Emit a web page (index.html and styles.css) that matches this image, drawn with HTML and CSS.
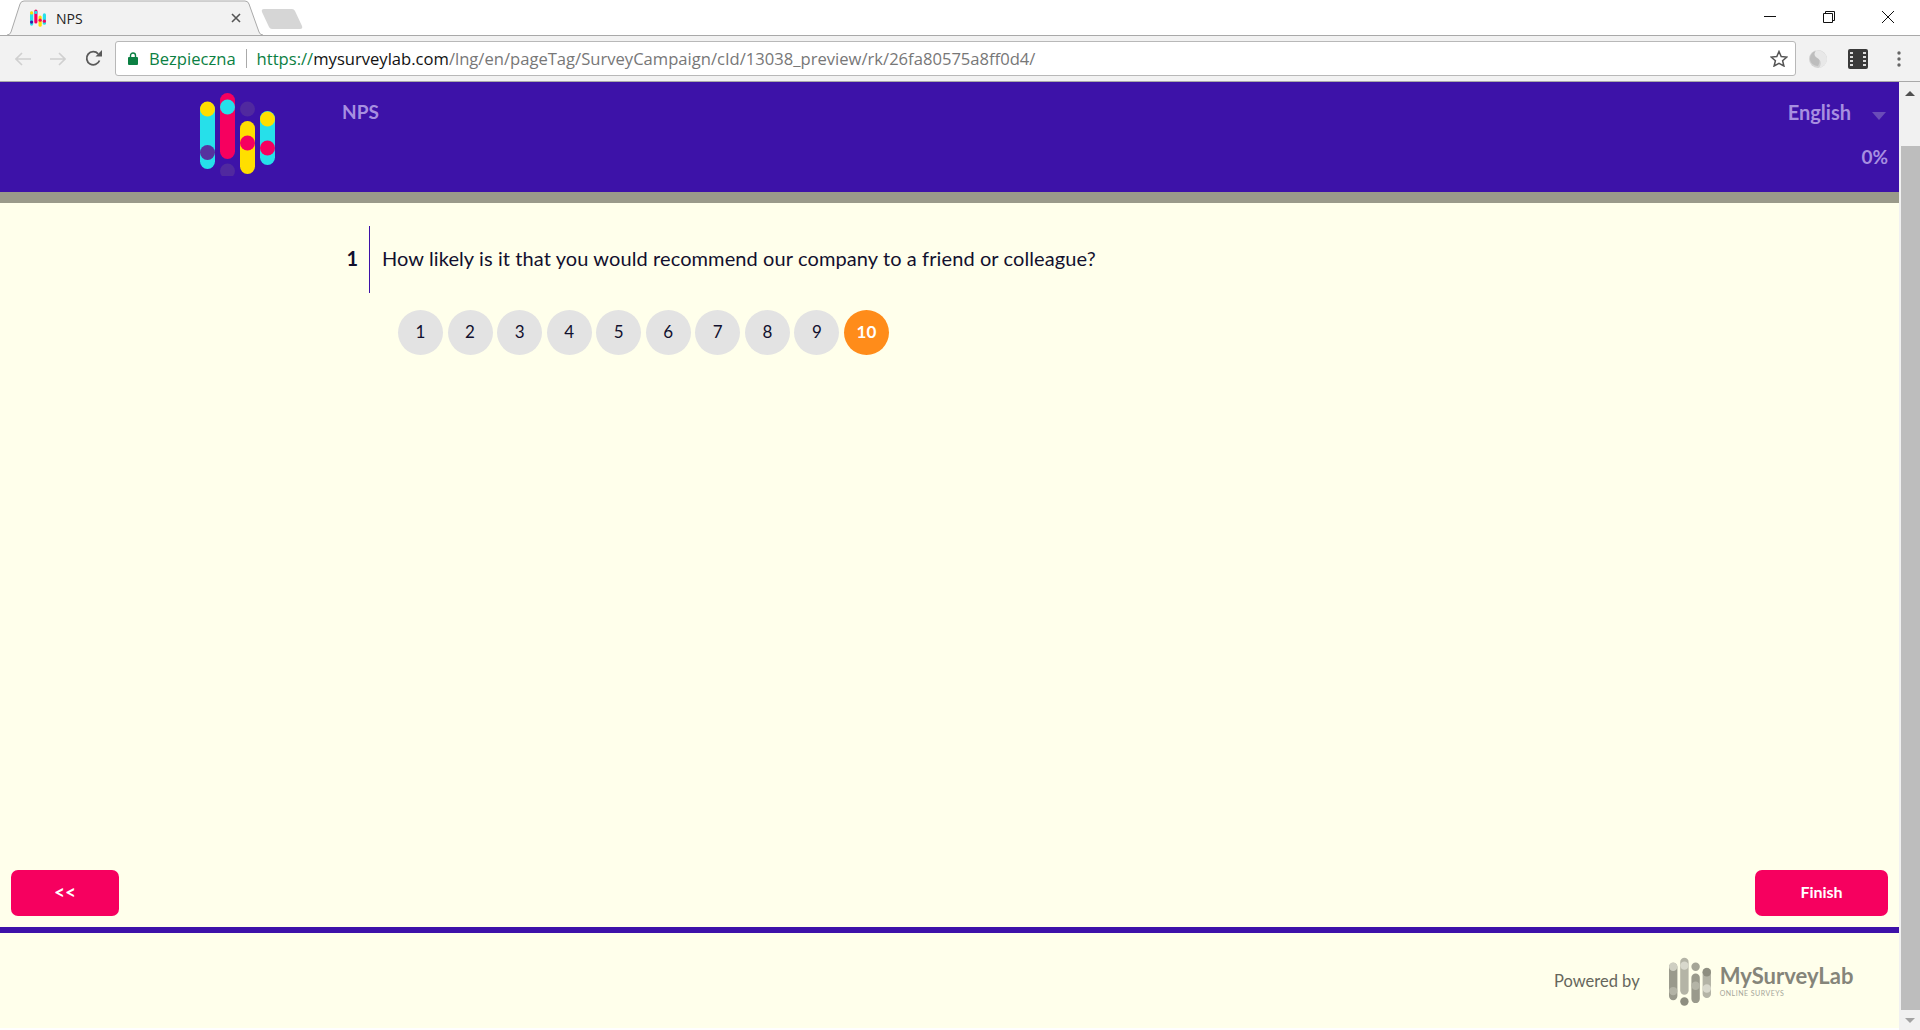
FILE: index.html
```html
<!DOCTYPE html>
<html lang="en">
<head>
    <meta charset="UTF-8">
    <meta name="viewport" content="width=device-width, initial-scale=1.0">
    <title>NPS</title>
    <link rel="stylesheet" href="styles.css">
</head>
<body>
    <div class="tabstrip">
        <div class="tab">
            <svg class="tab-shape" width="256" height="36" viewBox="0 0 256 36">
                <path d="M0 35 Q3 35 4 32 L13 4 Q14 1 17 1 L238 1 Q241 1 242 4 L252 32 Q253 35 256 35" fill="#f2f2f2" stroke="#a9a9a9"/>
            </svg>
            <svg class="favicon" width="16" height="20" viewBox="0 0 75 86">
                <rect x="0" y="12" width="15" height="67" rx="7.5" fill="#26e0ea"/>
                <rect x="20" y="3" width="15" height="66" rx="7.5" fill="#f6005f"/>
                <rect x="40" y="31" width="15" height="53" rx="7.5" fill="#ffdf00"/>
                <rect x="60" y="21" width="15" height="54" rx="7.5" fill="#26e0ea"/>
                <circle cx="7.5" cy="19" r="7.5" fill="#ffdf00"/>
                <circle cx="27.5" cy="17" r="7.5" fill="#26e0ea"/>
                <circle cx="47.5" cy="53" r="7.5" fill="#f6005f"/>
                <circle cx="67.5" cy="58" r="7.5" fill="#f6005f"/>
                <circle cx="7.5" cy="62" r="7.5" fill="#3d12a8"/>
            </svg>
            <span class="tab-title">NPS</span>
            <svg class="tab-close" width="10" height="10" viewBox="0 0 10 10">
                <path d="M1 1 L9 9 M9 1 L1 9" stroke="#555" stroke-width="1.6"/>
            </svg>
        </div>
        <svg class="new-tab" width="42" height="22" viewBox="0 0 42 22">
            <path d="M3 1 L31 1 Q33 1 34 3 L41 18 Q42 21 39 21 L11 21 Q9 21 8 19 L1 4 Q0 1 3 1 Z" fill="#d6d6d6"/>
        </svg>
        <div class="window-controls">
            <svg width="12" height="12" viewBox="0 0 12 12"><path d="M0 5.5 H12" stroke="#111"/></svg>
            <svg width="12" height="12" viewBox="0 0 12 12"><path d="M.5 2.5 H9.5 V11.5 H.5 Z M2.5 2.5 V.5 H11.5 V9.5 H9.5" fill="none" stroke="#111"/></svg>
            <svg width="12" height="12" viewBox="0 0 12 12"><path d="M0 0 L12 12 M12 0 L0 12" stroke="#111"/></svg>
        </div>
    </div>

    <div class="toolbar">
        <svg class="nav-icon" width="16" height="14" viewBox="0 0 16 14"><path d="M16 7 H1 M7 1 L1 7 L7 13" fill="none" stroke="#d0d0d0" stroke-width="1.6"/></svg>
        <svg class="nav-icon" width="16" height="14" viewBox="0 0 16 14"><path d="M0 7 H15 M9 1 L15 7 L9 13" fill="none" stroke="#d0d0d0" stroke-width="1.6"/></svg>
        <svg class="nav-icon" width="17" height="17" viewBox="0 0 17 17"><path d="M14.5 10.5 A6.6 6.6 0 1 1 13.2 3.8" fill="none" stroke="#5a5a5a" stroke-width="1.8"/><path d="M10.5 6.5 H17 V0 Z" fill="#5a5a5a"/></svg>
        <div class="omnibox">
            <svg class="lock" width="10" height="13" viewBox="0 0 10 13"><path d="M2.5 5 V3.5 A2.5 2.5 0 0 1 7.5 3.5 V5" fill="none" stroke="#0b8043" stroke-width="1.4"/><rect y="5" width="10" height="8" rx="1" fill="#0b8043"/></svg>
            <span class="secure">Bezpieczna</span>
            <span class="omni-sep"></span>
            <span class="url"><span class="url-scheme">https://</span><span class="url-host">mysurveylab.com</span>/lng/en/pageTag/SurveyCampaign/cId/13038_preview/rk/26fa80575a8ff0d4/</span>
            <svg class="star" width="18" height="17" viewBox="0 0 18 17"><path d="M9 1.5 L11.2 6.6 L16.8 7.1 L12.6 10.8 L13.9 16 L9 13.3 L4.1 16 L5.4 10.8 L1.2 7.1 L6.8 6.6 Z" fill="none" stroke="#555" stroke-width="1.5"/></svg>
        </div>
        <div class="extensions">
            <svg width="20" height="18" viewBox="0 0 20 18"><circle cx="10" cy="9" r="9" fill="#d2d2d2"/><path d="M8 0 C3 4 7 8 10 9 C13 10 14 14 11 18 C16 17 19 13 19 9 C19 4 14 0 8 0 Z" fill="#e8e8e8"/><path d="M8 1 C5 4 7 7 10 8.500 C12 9.500 12 13 10 16 C6 16 2 13 2 9 C2 5 4 2 8 1 Z" fill="#bdbdbd"/></svg>
            <svg width="20" height="20" viewBox="0 0 20 20"><rect width="20" height="20" rx="2" fill="#3a3a3a"/><path d="M2 3 H5 V5 H2 Z M2 7 H5 V9 H2 Z M2 11 H5 V13 H2 Z M2 15 H5 V17 H2 Z M15 3 H18 V5 H15 Z M15 7 H18 V9 H15 Z M15 11 H18 V13 H15 Z M15 15 H18 V17 H15 Z" fill="#ddd"/></svg>
            <svg class="menu-dots" width="4" height="16" viewBox="0 0 4 16"><circle cx="2" cy="2" r="1.700" fill="#666"/><circle cx="2" cy="8" r="1.700" fill="#666"/><circle cx="2" cy="14" r="1.700" fill="#666"/></svg>
        </div>
    </div>

    <div class="page">
        <div class="survey">
            <header class="survey-header">
                <svg class="logo" width="75" height="86" viewBox="0 0 75 86">
                    <rect x="0" y="12" width="15" height="67" rx="7.5" fill="#26e0ea"/>
                    <rect x="20" y="3" width="15" height="66" rx="7.5" fill="#f6005f"/>
                    <rect x="40" y="31" width="15" height="53" rx="7.5" fill="#ffdf00"/>
                    <rect x="60" y="21" width="15" height="54" rx="7.5" fill="#26e0ea"/>
                    <circle cx="7.5" cy="19" r="7.5" fill="#ffdf00"/>
                    <circle cx="7.5" cy="62.500" r="7.5" fill="#56339f"/>
                    <circle cx="27.5" cy="17" r="7.5" fill="#26e0ea"/>
                    <circle cx="27.5" cy="81" r="7.5" fill="#50299f"/>
                    <circle cx="47.5" cy="19" r="7.5" fill="#50299f"/>
                    <circle cx="47.5" cy="53" r="7.5" fill="#f6005f"/>
                    <circle cx="67.5" cy="29" r="7.5" fill="#ffdf00"/>
                    <circle cx="67.5" cy="58" r="7.5" fill="#f6005f"/>
                </svg>
                <div class="survey-title">NPS</div>
                <div class="header-right">
                    <div class="lang">English<span class="lang-arrow"></span></div>
                    <div class="progress">0%</div>
                </div>
            </header>
            <div class="progress-bar"></div>

            <main class="content">
                <div class="question">
                    <div class="question-no">1</div>
                    <div class="question-text">How likely is it that you would recommend our company to a friend or colleague?</div>
                </div>
                <div class="scale">
                    <span class="score">1</span>
                    <span class="score">2</span>
                    <span class="score">3</span>
                    <span class="score">4</span>
                    <span class="score">5</span>
                    <span class="score">6</span>
                    <span class="score">7</span>
                    <span class="score">8</span>
                    <span class="score">9</span>
                    <span class="score selected">10</span>
                </div>
                <div class="buttons">
                    <button class="btn btn-back" type="button">&lt;&lt;</button>
                    <button class="btn btn-finish" type="button">Finish</button>
                </div>
            </main>

            <footer class="survey-footer">
                <span class="powered">Powered by</span>
                <svg class="footer-logo" width="42" height="50" viewBox="0 0 75 89">
                    <rect x="0" y="12" width="15" height="67" rx="7.5" fill="#9a9a8c"/>
                    <rect x="20" y="3" width="15" height="66" rx="7.5" fill="#b4b4a6"/>
                    <rect x="40" y="31" width="15" height="53" rx="7.5" fill="#9a9a8c"/>
                    <rect x="60" y="21" width="15" height="54" rx="7.5" fill="#b4b4a6"/>
                    <circle cx="7.5" cy="19" r="7.5" fill="#cfcfc2"/>
                    <circle cx="7.5" cy="62.500" r="7.5" fill="#b4b4a6"/>
                    <circle cx="27.5" cy="17" r="7.5" fill="#d8d8cc"/>
                    <circle cx="27.5" cy="81" r="7.5" fill="#8e8e80"/>
                    <circle cx="47.5" cy="19" r="7.5" fill="#a5a597"/>
                    <circle cx="47.5" cy="53" r="7.5" fill="#b4b4a6"/>
                    <circle cx="67.5" cy="29" r="7.5" fill="#8e8e80"/>
                    <circle cx="67.5" cy="58" r="7.5" fill="#d8d8cc"/>
                </svg>
                <div class="brand">
                    <div class="brand-name">MySurveyLab</div>
                    <div class="brand-sub">ONLINE SURVEYS</div>
                </div>
            </footer>
        </div>

        <div class="scrollbar">
            <span class="scroll-up"></span>
            <span class="scroll-thumb"></span>
            <span class="scroll-down"></span>
        </div>
    </div>
</body>
</html>
```

FILE: styles.css
```css
html, body {
    height: 100%;
}
body {
    margin: 0;
    display: flex;
    flex-direction: column;
    overflow: hidden;
    background: #fff;
    font-family: Lato, "Open Sans", sans-serif;
    color: #12102e;
}

/* browser chrome */
.tabstrip {
    height: 36px;
    display: flex;
    align-items: flex-start;
    padding-left: 7px;
    border-bottom: 1px solid #a9a9a9;
    box-sizing: border-box;
    background: #fff;
}
.tab {
    position: relative;
    width: 256px;
    height: 36px;
    display: flex;
    align-items: center;
    padding: 0 16px 0 23px;
    box-sizing: border-box;
}
.tab-shape {
    position: absolute;
    top: 0;
    left: 0;
}
.favicon, .tab-title, .tab-close {
    position: relative;
}
.tab-title {
    margin-left: 10px;
    font-family: "Open Sans", sans-serif;
    font-size: 14px;
    color: #222;
}
.tab-close {
    margin-left: auto;
    margin-right: 6px;
}
.new-tab {
    margin: 8px 0 0 -2px;
}
.window-controls {
    margin-left: auto;
    display: flex;
    gap: 47px;
    padding: 11px 26px 0 0;
}
.window-controls svg {
    display: block;
}
.toolbar {
    height: 46px;
    display: flex;
    align-items: center;
    background: #f2f2f2;
    padding-left: 15px;
    border-bottom: 1px solid #a9a9a9;
    box-sizing: border-box;
    flex-shrink: 0;
}
.nav-icon {
    margin-right: 19px;
}
.omnibox {
    width: 1681px;
    height: 35px;
    margin-left: -6px;
    display: flex;
    align-items: center;
    padding: 0 7px 0 12px;
    background: #fff;
    border: 1px solid #b8b8b8;
    border-radius: 3px;
    box-sizing: border-box;
    font-family: "Open Sans", sans-serif;
    font-size: 16.6px;
}
.secure {
    margin-left: 11px;
    color: #0b8043;
}
.omni-sep {
    width: 1px;
    height: 19px;
    margin: 0 10px 0 10px;
    background: #aaa;
}
.url {
    color: #777;
    white-space: nowrap;
}
.url-scheme {
    color: #0b8043;
}
.url-host {
    color: #111;
}
.star {
    margin-left: auto;
}
.extensions {
    display: flex;
    align-items: center;
    gap: 20px;
    margin-left: 12px;
}
.menu-dots {
    margin-left: 9px;
}

/* survey page */
.page {
    flex: 1;
    min-height: 0;
    display: flex;
}
.survey {
    flex: 1;
    display: flex;
    flex-direction: column;
    background: #ffffeb;
    margin-bottom: 2px;
}
.survey-header {
    height: 110px;
    display: flex;
    background: #3d12a8;
    color: #a78fe0;
    font-weight: 700;
    font-size: 19px;
}
.logo {
    margin: 8px 0 0 200px;
}
.survey-title {
    margin: 18px 0 0 67px;
}
.header-right {
    margin-left: auto;
    padding: 18px 11px 0 0;
    display: flex;
    flex-direction: column;
    align-items: flex-end;
    gap: 21px;
}
.lang {
    display: flex;
    align-items: center;
    gap: 21px;
    margin-right: 2px;
    font-size: 20px;
}
.lang-arrow {
    width: 0;
    height: 0;
    margin-top: 8px;
    border-left: 7px solid transparent;
    border-right: 7px solid transparent;
    border-top: 8px solid #6a4cb8;
}
.progress-bar {
    height: 11px;
    background: #9a9a8a;
}
.content {
    flex: 1;
    display: flex;
    flex-direction: column;
    padding: 23px 11px 11px;
}
.question {
    display: flex;
    align-items: center;
    height: 67px;
    margin-left: 330px;
    font-size: 20px;
}
.question-no {
    width: 29px;
    height: 100%;
    display: flex;
    align-items: center;
    justify-content: flex-end;
    padding: 0 11px 3px 0;
    box-sizing: border-box;
    border-right: 1px solid #3d12a8;
    font-weight: 700;
}
.question-text {
    margin-left: 12px;
    padding-bottom: 3px;
    letter-spacing: .1px;
}
.scale {
    display: flex;
    gap: 4.55px;
    margin: 17px 0 0 387px;
}
.score {
    width: 45px;
    height: 45px;
    flex-shrink: 0;
    display: flex;
    align-items: center;
    justify-content: center;
    padding-bottom: 3px;
    box-sizing: border-box;
    border-radius: 50%;
    background: #e3e3e3;
    font-size: 17px;
}
.score.selected {
    background: #ff8c1a;
    color: #fff;
    font-weight: 700;
}
.buttons {
    margin-top: auto;
    display: flex;
    justify-content: space-between;
}
.btn {
    height: 46px;
    padding-bottom: 4px;
    border: 0;
    border-radius: 7px;
    background: #f6005f;
    color: #fff;
    font-family: inherit;
    font-weight: 700;
    font-size: 16px;
}
.btn-back {
    width: 108px;
    font-size: 19px;
}
.btn-finish {
    width: 133px;
}
.survey-footer {
    height: 101px;
    display: flex;
    align-items: center;
    border-top: 6px solid #3d12a8;
    box-sizing: border-box;
    padding-left: 1554px;
    color: #66665c;
}
.powered {
    font-size: 16.5px;
}
.footer-logo {
    margin-left: 29px;
}
.brand {
    margin-left: 9px;
    margin-top: -2px;
}
.brand-name {
    font-size: 22px;
    font-weight: 700;
    line-height: 26px;
    color: #85857a;
}
.brand-sub {
    font-size: 7px;
    letter-spacing: .5px;
    color: #a5a59a;
}

/* scrollbar */
.scrollbar {
    width: 21px;
    display: flex;
    flex-direction: column;
    align-items: center;
    background: #f1f1f1;
}
.scroll-up, .scroll-down {
    width: 0;
    height: 0;
    border-left: 5px solid transparent;
    border-right: 5px solid transparent;
}
.scroll-up {
    margin-top: 9px;
    border-bottom: 5px solid #505050;
}
.scroll-thumb {
    width: 19px;
    flex: 1;
    margin: 50px 0 0 2px;
    background: #bdbdbd;
}
.scroll-down {
    margin: 8px 0 7px;
    border-top: 5px solid #a3a3a3;
}
```
